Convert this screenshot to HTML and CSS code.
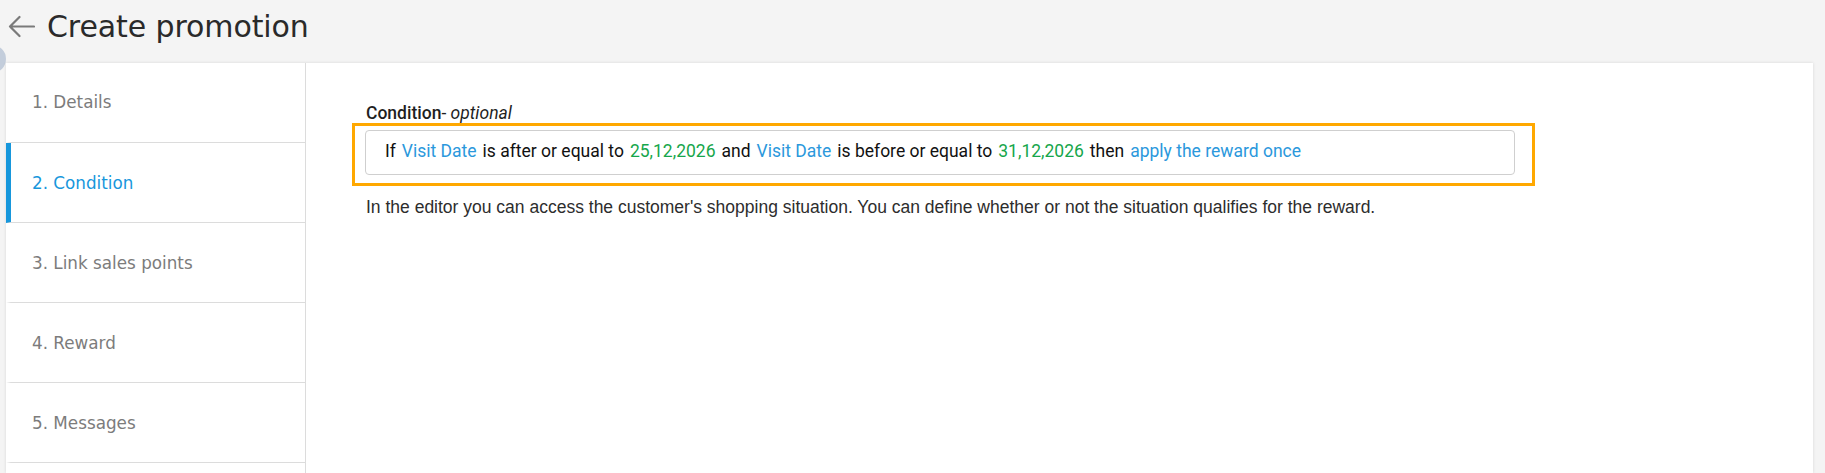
FILE: index.html
```html
<!DOCTYPE html>
<html lang="en">
<head>
<meta charset="utf-8">
<title>Create promotion</title>
<link rel="stylesheet" href="styles.css">
</head>
<body>
<div class="page">
  <span class="avatar-dot"></span>
  <header class="header">
    <svg class="back" width="27" height="23" viewBox="0 0 27 23" aria-hidden="true">
      <path d="M26 11.5H2M11.5 2L2 11.5l9.5 9.5" fill="none" stroke="#7a7a7a" stroke-width="2.2" stroke-linecap="round" stroke-linejoin="round"/>
    </svg>
    <h1 class="title">Create promotion</h1>
  </header>
  <main class="card">
    <nav class="steps">
      <div class="step">1. Details</div>
      <div class="step active">2. Condition</div>
      <div class="step">3. Link sales points</div>
      <div class="step">4. Reward</div>
      <div class="step">5. Messages</div>
      <div class="step"></div>
    </nav>
    <section class="content">
      <div class="label">Condition<span class="opt">- <em>optional</em></span></div>
      <div class="highlight">
        <div class="editor">
          <span class="w">If</span>
          <span class="field">Visit Date</span>
          <span class="w">is after or equal to</span>
          <span class="val">25,12,2026</span>
          <span class="w">and</span>
          <span class="field">Visit Date</span>
          <span class="w">is before or equal to</span>
          <span class="val">31,12,2026</span>
          <span class="w">then</span>
          <span class="field">apply the reward once</span>
        </div>
      </div>
      <p class="help">In the editor you can access the customer's shopping situation. You can define whether or not the situation qualifies for the reward.</p>
    </section>
  </main>
</div>
</body>
</html>
```
FILE: styles.css
```css
html, body {
  margin: 0;
  padding: 0;
  background: #f4f4f4;
  height: 100%;
  overflow: hidden;
}
.page {
  position: relative;
  height: 473px;
  display: flex;
  flex-direction: column;
  overflow: hidden;
}
.avatar-dot {
  position: absolute;
  left: -22px;
  top: 45px;
  width: 28px;
  height: 28px;
  border-radius: 50%;
  background: #c3cddb;
}
.header {
  flex: none;
  height: 63px;
  display: flex;
  align-items: center;
  padding-left: 8px;
  padding-bottom: 10px;
  box-sizing: border-box;
}
.back {
  flex: none;
  margin-right: 12px;
}
.title {
  margin: 0;
  font-family: "DejaVu Sans", sans-serif;
  font-weight: 400;
  font-size: 30px;
  line-height: 34px;
  color: #2a2a2a;
  letter-spacing: -0.1px;
}
.card {
  position: relative;
  flex: 1;
  min-height: 0;
  overflow: hidden;
  margin: 0 12px 0 6px;
  background: #fff;
  box-shadow: 0 0 3px rgba(0,0,0,0.12);
  display: flex;
}
.steps {
  width: 300px;
  border-right: 1px solid #dcdcdc;
  box-sizing: border-box;
  flex: none;
}
.step {
  height: 80px;
  box-sizing: border-box;
  border-bottom: 1px solid #dcdcdc;
  border-left: 5px solid transparent;
  padding-left: 21px;
  display: flex;
  align-items: center;
  font-family: "DejaVu Sans", sans-serif;
  font-size: 16.8px;
  color: #7c7c7c;
}
.step:first-child {
  padding-bottom: 1px;
}
.step.active {
  border-left-color: #1797dc;
  color: #1797dc;
}
.content {
  flex: 1;
  padding: 40px 60px 0 60px;
}
.label {
  font-family: Roboto, sans-serif;
  font-weight: 500;
  font-size: 17.5px;
  color: #1f1f1f;
  line-height: 20px;
}
.opt {
  font-weight: 400;
}
.opt em {
  font-style: italic;
}
.highlight {
  display: inline-block;
  margin-left: -14px;
  border: 3px solid #ffa800;
  padding: 4px 17px 8px 10px;
}
.editor {
  width: 1150px;
  height: 45px;
  box-sizing: border-box;
  border: 1px solid #cfcfcf;
  border-radius: 4px;
  padding: 0 19px 4px;
  display: flex;
  align-items: center;
  gap: 6px;
  font-family: Roboto, sans-serif;
  font-size: 17.5px;
  color: #111;
}
.field {
  color: #2b98dc;
}
.val {
  color: #16a64b;
}
.help {
  margin: 11px 0 0 0;
  font-family: "Liberation Sans", Arial, sans-serif;
  font-size: 17.5px;
  line-height: 20px;
  color: #2d2d2d;
}
```
